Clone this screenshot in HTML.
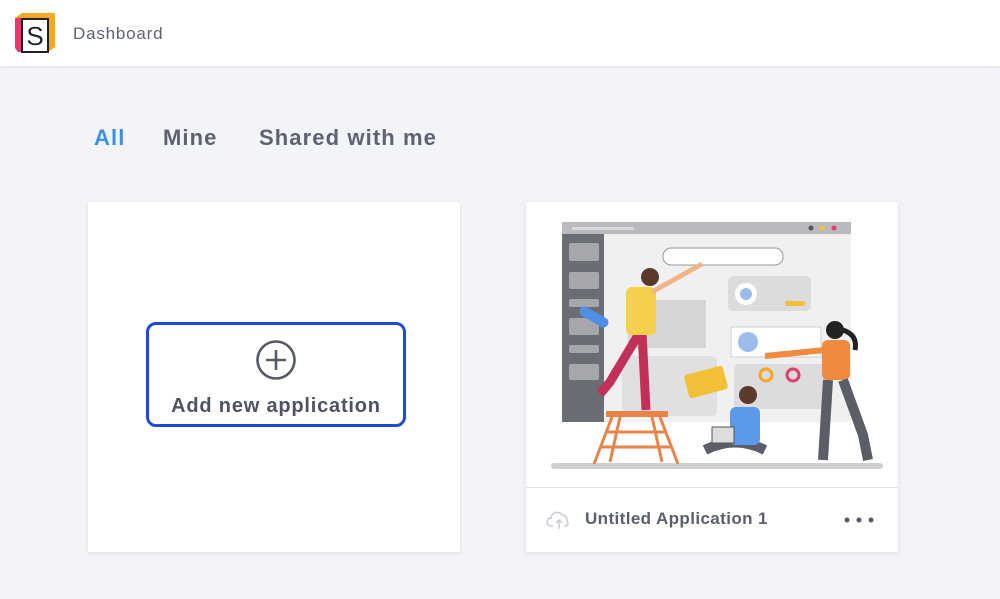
<!DOCTYPE html>
<html><head><meta charset="utf-8"><style>
*{margin:0;padding:0;box-sizing:border-box}
body{width:1000px;height:599px;background:#f3f4f8;font-family:"Liberation Sans",sans-serif;position:relative;overflow:hidden}
.hdr{position:absolute;left:0;top:0;width:1000px;height:66px;background:#fff;box-shadow:0 1px 3px rgba(0,0,0,.08)}
.hdr .t{position:absolute;left:73px;top:24px;font-size:17px;color:#5f6370;letter-spacing:.8px}
.tabs{position:absolute;top:125px;font-size:22px;font-weight:bold;color:#5d6270;letter-spacing:1.1px}
.card{position:absolute;top:202px;width:372px;height:350px;background:#fff;box-shadow:0 1px 4px rgba(0,0,0,.1)}
.add{position:absolute;left:58px;top:120px;width:260px;height:105px;border:3px solid #1f4ad6;border-radius:10px;text-align:center}
.add .l{position:absolute;left:0;right:0;top:70px;font-size:20px;font-weight:bold;color:#4e5360;letter-spacing:.8px}
.foot{position:absolute;left:0;right:0;top:285px;border-top:1px solid #dfe1e6}
.foot .n{position:absolute;left:59px;top:21px;font-size:17px;font-weight:bold;color:#5a5f6c;letter-spacing:.4px}
</style></head><body>
<div class="hdr">
<svg style="position:absolute;left:14px;top:12px" width="42" height="42" viewBox="0 0 42 42">
<polygon points="1,6 8,1 41,1 34,6" fill="#f5a623"/>
<polygon points="34,6 41,1 41,35 34,40" fill="#f5a623"/>
<polygon points="1,6 8,6 8,40 4,40 1,36" fill="#e23d6d"/>
<rect x="8" y="7" width="26" height="33" fill="#fff" stroke="#222" stroke-width="2"/>
<text x="21" y="33" text-anchor="middle" font-family="Liberation Sans" font-size="26" fill="#1f2433">S</text>
</svg>
<div class="t">Dashboard</div>
</div>
<div class="tabs" style="left:94px;color:#3b8fe6">All</div>
<div class="tabs" style="left:163px">Mine</div>
<div class="tabs" style="left:259px">Shared with me</div>

<div class="card" style="left:88px">
<div class="add">
<svg style="position:absolute;left:106px;top:14px" width="42" height="42" viewBox="0 0 42 42"><circle cx="21" cy="21" r="18.5" fill="none" stroke="#555a66" stroke-width="2.6"/><path d="M21 11v20M11 21h20" stroke="#555a66" stroke-width="2.6"/></svg>
<div class="l">Add new application</div>
</div>
</div>

<div class="card" style="left:526px">
<svg style="position:absolute;left:0;top:0" width="372" height="285" viewBox="526 200 372 285">
<rect x="562" y="220" width="289" height="200" fill="#f0f0f1"/>
<rect x="562" y="220" width="289" height="12" fill="#b9babd"/>
<rect x="572" y="225" width="62" height="3" fill="#d9d9db"/>
<circle cx="811" cy="226" r="2.5" fill="#555"/><circle cx="822" cy="226" r="2.5" fill="#f2c037"/><circle cx="834" cy="226" r="2.5" fill="#e23d6d"/>
<rect x="562" y="232" width="42" height="188" fill="#6a6d74"/>
<rect x="569" y="241" width="30" height="18" rx="2" fill="#a5a7ab"/>
<rect x="569" y="270" width="30" height="17" rx="2" fill="#a5a7ab"/>
<rect x="569" y="297" width="30" height="8" rx="2" fill="#a5a7ab"/>
<rect x="569" y="316" width="30" height="17" rx="2" fill="#a5a7ab"/>
<rect x="569" y="343" width="30" height="8" rx="2" fill="#a5a7ab"/>
<rect x="569" y="362" width="30" height="16" rx="2" fill="#a5a7ab"/>
<rect x="663" y="246" width="120" height="17" rx="8" fill="#fff" stroke="#999"/>
<rect x="728" y="274" width="83" height="35" rx="5" fill="#dcdcde"/>
<circle cx="746" cy="292" r="11" fill="#fff"/><circle cx="746" cy="292" r="6" fill="#9bbbe8"/>
<rect x="785" y="299" width="20" height="5" rx="2" fill="#f2c037"/>
<rect x="731" y="325" width="90" height="30" fill="#fff" stroke="#ccc"/>
<circle cx="748" cy="340" r="10" fill="#9bbbe8"/>
<rect x="734" y="362" width="98" height="45" rx="5" fill="#dcdcde"/>
<rect x="628" y="298" width="78" height="48" fill="#d5d5d7"/>
<rect x="622" y="354" width="95" height="60" rx="5" fill="#e0e0e2"/>
<circle cx="766" cy="373" r="6" fill="none" stroke="#f5a623" stroke-width="3"/>
<circle cx="793" cy="373" r="6" fill="none" stroke="#e23d6d" stroke-width="3"/>
<rect x="551" y="461" width="332" height="6" rx="3" fill="#cfcfd1"/>
<rect x="606" y="409" width="62" height="6" fill="#e6844a"/>
<path d="M612 415l-18 47M660 415l18 47M620 415l-10 45M652 415l10 45M600 445h70M605 430h62" stroke="#e6844a" stroke-width="3" fill="none"/>
<path d="M640 330l-30 50-10 12M642 330l4 78" stroke="#c2305a" stroke-width="9" fill="none"/>
<rect x="626" y="285" width="30" height="48" rx="6" fill="#f5d04a"/>
<circle cx="650" cy="275" r="9" fill="#5a3a2a"/>
<path d="M652 290l50-28" stroke="#f0b48a" stroke-width="5"/>
<rect x="578" y="310" width="32" height="10" rx="5" fill="#4f8fe6" transform="rotate(30 594 315)"/>
<path d="M705 448q30-15 60 0" stroke="#5b5e66" stroke-width="10" fill="none"/>
<rect x="730" y="405" width="30" height="38" rx="6" fill="#5a9ae8"/>
<circle cx="748" cy="393" r="9" fill="#5a3a2a"/>
<rect x="686" y="368" width="40" height="24" rx="3" fill="#f2c037" transform="rotate(-15 706 380)"/>
<rect x="712" y="425" width="22" height="16" fill="#ddd" stroke="#555"/>
<circle cx="835" cy="328" r="9" fill="#222"/>
<path d="M843 328q15 5 12 20" stroke="#222" stroke-width="5" fill="none"/>
<rect x="822" y="338" width="28" height="40" rx="6" fill="#f08a3e"/>
<path d="M825 348l-60 6" stroke="#f08a3e" stroke-width="6"/>
<path d="M828 378l-5 80M843 378l20 55 5 25" stroke="#5b5e66" stroke-width="10" fill="none"/>
</svg>
<div class="foot">
<svg style="position:absolute;left:20px;top:22px" width="26" height="20" viewBox="0 0 26 20"><path d="M7 16H5a4 4 0 0 1 0-8 6 6 0 0 1 11-3 5 5 0 0 1 5 6 3 3 0 0 1-1 5h-2M13 19V10M10 13l3-3 3 3" fill="none" stroke="#c8cbd2" stroke-width="1.5"/></svg>
<div class="n">Untitled Application 1</div>
<svg style="position:absolute;left:317px;top:28px" width="36" height="8"><circle cx="4" cy="4" r="2.5" fill="#555a66"/><circle cx="16" cy="4" r="2.5" fill="#555a66"/><circle cx="28" cy="4" r="2.5" fill="#555a66"/></svg>
</div>
</div>
</body></html>
